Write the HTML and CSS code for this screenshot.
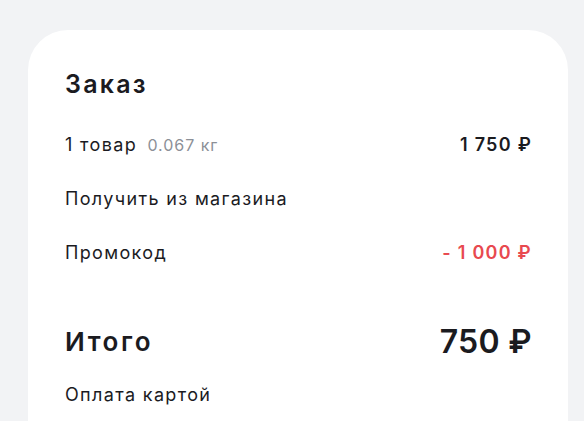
FILE: index.html
```html
<!DOCTYPE html>
<html lang="ru">
<head>
<meta charset="utf-8">
<link rel="stylesheet" href="styles.css">
</head>
<body>
<section class="card">
  <h2 class="title">Заказ</h2>
  <div class="row">
    <span class="label">1 товар <span class="weight">0.067 кг</span></span>
    <span class="value">1 750 ₽</span>
  </div>
  <div class="row">
    <span class="label">Получить из магазина</span>
  </div>
  <div class="row">
    <span class="label">Промокод</span>
    <span class="value discount">- 1 000 ₽</span>
  </div>
  <div class="row total">
    <span class="total-label">Итого</span>
    <span class="total-value">750 ₽</span>
  </div>
  <div class="row last">
    <span class="label">Оплата картой</span>
  </div>
</section>
</body>
</html>
```
FILE: styles.css
```css
html, body {
  margin: 0;
  padding: 0;
}
body {
  background: #f2f3f5;
  font-family: Inter, "Noto Sans", sans-serif;
  color: #1b1b1f;
  padding: 30px 16px 0 28px;
  overflow: hidden;
  height: 421px;
  box-sizing: border-box;
}
.card {
  background: #ffffff;
  border-radius: 40px 40px 0 0;
  padding: 38px 36px 0 37px;
  height: 391px;
  box-sizing: border-box;
  overflow: hidden;
}
.title {
  margin: 0 0 17px;
  font-size: 25px;
  line-height: 32px;
  font-weight: 600;
  letter-spacing: 0.09em;
}
.row {
  display: flex;
  justify-content: space-between;
  align-items: center;
  height: 54px;
}
.row.last {
  height: 52px;
}
.label {
  font-size: 18px;
  font-weight: 400;
  letter-spacing: 0.075em;
}
.weight {
  font-size: 16px;
  color: #8c9097;
  margin-left: 4px;
  letter-spacing: 0.06em;
}
.value {
  font-size: 18px;
  font-weight: 600;
  letter-spacing: 0.07em;
}
.discount {
  color: #e8494f;
}
.total {
  margin-top: 35px;
}
.total-label {
  font-size: 26px;
  font-weight: 600;
  letter-spacing: 0.1em;
}
.total-value {
  font-size: 32px;
  font-weight: 600;
  letter-spacing: 0.01em;
}
```
